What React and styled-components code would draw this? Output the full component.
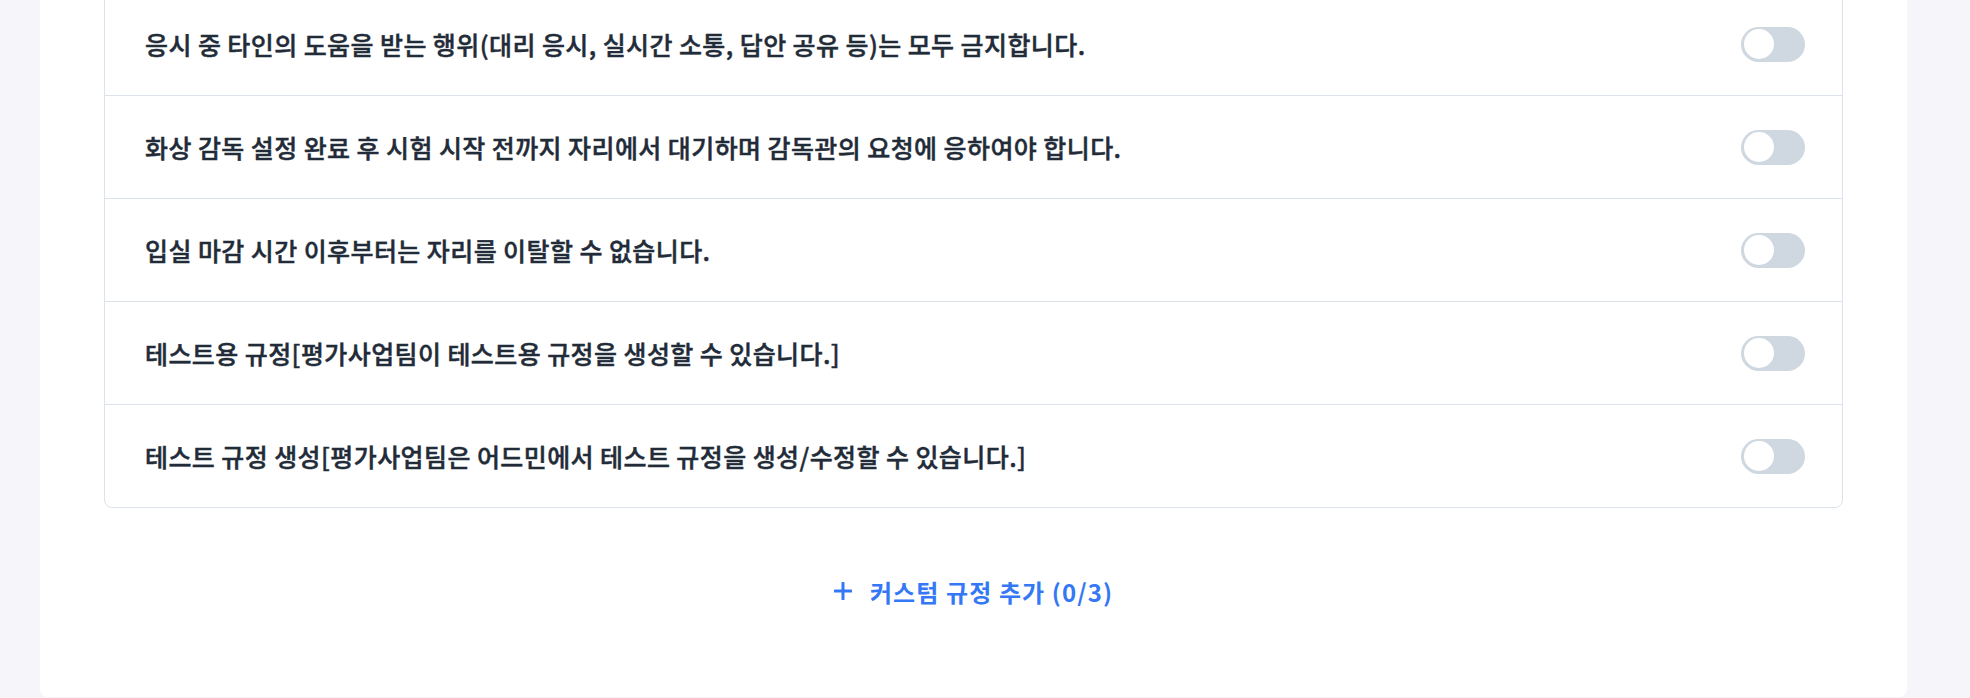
import React, { useState } from "react";
import styled, { createGlobalStyle } from "styled-components";

const GlobalStyle = createGlobalStyle`
  html, body {
    margin: 0;
    padding: 0;
    background: #f5f5fa;
    overflow: hidden;
  }
  body {
    font-family: "Noto Sans CJK KR", "Noto Sans", sans-serif;
    color: #1f2937;
  }
`;

const Page = styled.div`
  padding: 0 63px 0 40px;
`;

const Panel = styled.section`
  margin-top: -8px;
  background: #ffffff;
  border-radius: 0 0 8px 8px;
  padding: 0 64px 82px;
`;

const Card = styled.ul`
  list-style: none;
  margin: 0;
  padding: 0;
  border: 1px solid #dde3ea;
  border-radius: 8px;
`;

const Row = styled.li`
  display: flex;
  align-items: center;
  justify-content: space-between;
  height: 102px;
  padding: 0 37px 0 40px;
  border-bottom: ${(p) => (p.$last ? "none" : "1px solid #dde3ea")};
`;

const RuleText = styled.span`
  font-size: 25px;
  font-weight: 500;
  color: #222b38;
  letter-spacing: 0.42px;
  -webkit-text-stroke: 0.45px #222b38;
`;

const Track = styled.button`
  position: relative;
  width: 64px;
  height: 35px;
  border: none;
  border-radius: 18px;
  padding: 0;
  background: ${(p) => (p.$on ? "#3478f6" : "#cfd8e0")};
  cursor: pointer;
  flex-shrink: 0;
`;

const Knob = styled.span`
  position: absolute;
  top: 2.5px;
  left: ${(p) => (p.$on ? "31px" : "3px")};
  width: 30px;
  height: 30px;
  border-radius: 50%;
  background: #ffffff;
  transition: left 0.2s;
`;

const Footer = styled.div`
  display: flex;
  justify-content: center;
  margin-top: 59px;
`;

const AddButton = styled.button`
  display: flex;
  align-items: center;
  gap: 18px;
  height: 48px;
  border: none;
  background: transparent;
  color: #3478f6;
  font-family: "Noto Sans CJK KR", "Noto Sans", sans-serif;
  font-size: 24px;
  font-weight: 700;
  letter-spacing: 1.1px;
  cursor: pointer;
  padding: 0;
`;

const PlusIcon = () => (
  <svg width="18" height="18" viewBox="0 0 18 18" aria-hidden="true">
    <path d="M9 1v16M1 9h16" stroke="#3478f6" strokeWidth="3" strokeLinecap="round" fill="none" />
  </svg>
);

const rules = [
  "응시 중 타인의 도움을 받는 행위(대리 응시, 실시간 소통, 답안 공유 등)는 모두 금지합니다.",
  "화상 감독 설정 완료 후 시험 시작 전까지 자리에서 대기하며 감독관의 요청에 응하여야 합니다.",
  "입실 마감 시간 이후부터는 자리를 이탈할 수 없습니다.",
  "테스트용 규정[평가사업팀이 테스트용 규정을 생성할 수 있습니다.]",
  "테스트 규정 생성[평가사업팀은 어드민에서 테스트 규정을 생성/수정할 수 있습니다.]",
];

function Toggle() {
  const [on, setOn] = useState(false);
  return (
    <Track $on={on} onClick={() => setOn(!on)} aria-pressed={on}>
      <Knob $on={on} />
    </Track>
  );
}

export default function App() {
  return (
    <>
      <GlobalStyle />
      <Page>
        <Panel>
          <Card>
            {rules.map((r, i) => (
              <Row key={i} $last={i === rules.length - 1}>
                <RuleText>{r}</RuleText>
                <Toggle />
              </Row>
            ))}
          </Card>
          <Footer>
            <AddButton>
              <PlusIcon />
              <span>커스텀 규정 추가 (0/3)</span>
            </AddButton>
          </Footer>
        </Panel>
      </Page>
    </>
  );
}
